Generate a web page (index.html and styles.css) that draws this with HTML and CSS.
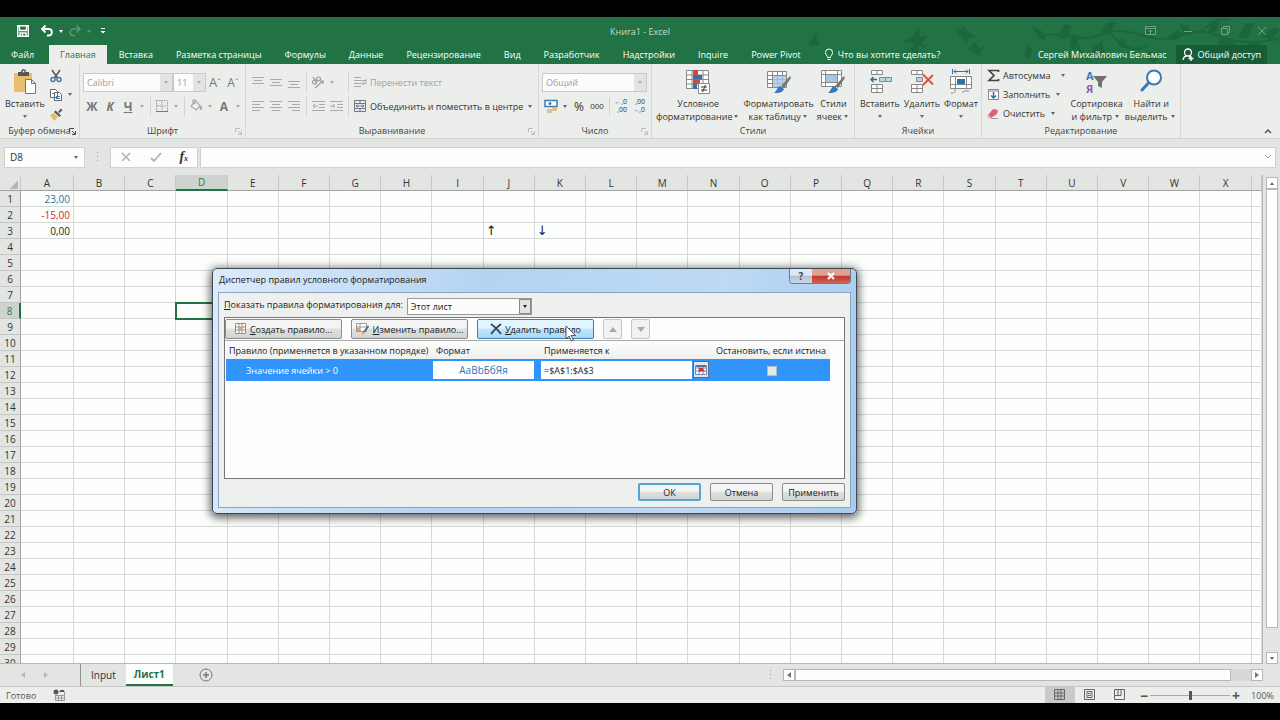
FILE: index.html
```html
<!DOCTYPE html>
<html lang="ru">

<head>
    <meta charset="UTF-8">
    <meta name="viewport" content="width=device-width, initial-scale=1.0">
    <title>Книга1 - Excel</title>
    <link rel="stylesheet" href="styles.css">
</head>

<body>
    <div class="app">
        <!-- Title bar and ribbon tabs -->
        <header class="top">
            <svg class="decor" viewBox="0 0 480 47" width="480" height="47" fill="none" stroke="#1d663d" stroke-width="2">
                <path d="M238 20c20-9 40 8 62-2s42 2 60 4 30-12 50-6 30 14 68 6M310 16c10 12 20 20 36 14M268 17c12 8 10 22 24 28M400 15c10-8 18-14 30-13M428 22c8 10 20 12 30 14"/>
                <g fill="#1d663d" stroke="none">
                    <path d="M8 28l8-13 1 8 3 5zM102 24l10-4 6-9 2 9 8-1-6 7 4 5-7-2-5 4-1-7zM110 31l6-2 3 6-5 2zM156 16l8-7 4 6 9 5-8 1-3 6-5-7zM168 33l7-8 4 6 8-2-6 5-2 6-5-5z"/>
                    <path d="M224 38l4-12 4 8-2 8zM240 22l-8-12 12 5 2 8zM258 21l6-14 8 2-6 12zM280 19l-6 14-5-5 4-11zM292 31l10-7 2 11-9 7zM300 15l8-10 8 1-7 12zM322 21l8 12-12-4zM344 20l4-13 8 3-5 10zM350 34l12 4-8 8-9-4zM366 21l12-8 6 5-9 6zM384 18l-5-12 10 4 2 8zM408 16l3-12 10-3-4 13zM420 18l12 10-14 2zM438 20l8-14 8 1-7 15zM452 24l13 6-10 6-9-6zM462 19l12-9 6 3-9 10z"/>
                </g>
            </svg>
            <div class="titlebar">
                <div class="quick">
                    <button class="q" aria-label="Сохранить"><svg width="14" height="14" viewBox="0 0 14 14" fill="none" stroke="#fff" stroke-width="1.400"><path d="M1.700 1.700h10.600v10.600H1.700zM3.500 2v4.500h7V2M4 12V9h6v3"/><path d="M6.500 9.500v2.500" stroke-width="1.500"/></svg></button>
                    <button class="q" aria-label="Отменить"><svg width="14" height="14" viewBox="0 0 14 14" fill="none" stroke="#fff" stroke-width="1.800"><path d="M5.500 1.500L2 5l3.500 3.500M2 5h6.500c4.500 0 4.500 6.500 0 6.500H7"/></svg></button>
                    <span class="caret light"></span>
                    <button class="q faded" aria-label="Вернуть"><svg width="14" height="14" viewBox="0 0 14 14" fill="none" stroke="#fff" stroke-width="1.600"><path d="M8.500 1.500L12 5 8.500 8.500M12 5H5.500c-4.500 0-4.500 6.500 0 6.500H7"/></svg></button>
                    <span class="caret light faded"></span>
                    <button class="q" aria-label="Настройка панели"><svg width="8" height="8" viewBox="0 0 8 8" fill="#fff"><path d="M2 1h4v1H2zM1.500 4h5L4 6.500z"/></svg></button>
                </div>
                <span class="doc-name">Книга1 - Excel</span>
                <div class="win-buttons">
                    <button aria-label="Параметры ленты"><svg width="12" height="12" viewBox="0 0 12 12" fill="none" stroke="currentColor"><path d="M.5 1.500h10v8H.5zM.5 3.500h10M5.500 9V5M3.500 7l2-2 2 2"/></svg></button>
                    <button aria-label="Свернуть"><svg width="12" height="12" viewBox="0 0 12 12" fill="none" stroke="currentColor"><path d="M2 6.500h8"/></svg></button>
                    <button aria-label="Развернуть"><svg width="12" height="12" viewBox="0 0 12 12" fill="none" stroke="currentColor"><path d="M2.500 3.500h6v6h-6zM4.500 3V1.500h6v6H9"/></svg></button>
                    <button aria-label="Закрыть"><svg width="12" height="12" viewBox="0 0 12 12" fill="none" stroke="currentColor"><path d="M2 2l8 8M10 2l-8 8"/></svg></button>
                </div>
            </div>
            <nav class="tabs">
                <a href="#" class="tab">Файл</a>
                <a href="#" class="tab active">Главная</a>
                <a href="#" class="tab">Вставка</a>
                <a href="#" class="tab">Разметка страницы</a>
                <a href="#" class="tab">Формулы</a>
                <a href="#" class="tab">Данные</a>
                <a href="#" class="tab">Рецензирование</a>
                <a href="#" class="tab">Вид</a>
                <a href="#" class="tab">Разработчик</a>
                <a href="#" class="tab">Надстройки</a>
                <a href="#" class="tab">Inquire</a>
                <a href="#" class="tab">Power Pivot</a>
                <a href="#" class="tab tell"><svg width="10" height="13" viewBox="0 0 10 13" fill="none" stroke="#fff"><path d="M3.500 9.500c0-2-2-2.500-2-5a3.500 3.500 0 0 1 7 0c0 2.500-2 3-2 5zM3.500 11.500h3"/></svg>Что вы хотите сделать?</a>
                <a href="#" class="tab user">Сергей Михайлович Бельмас</a>
                <button class="share"><svg width="12" height="13" viewBox="0 0 12 13" fill="none" stroke="#fff" stroke-width="1.300"><circle cx="6" cy="4.500" r="3.500"/><path d="M1 12c.5-3 2-4 4-4M7 7.500l1.500 2M9 8v5M6.500 10.500h5"/></svg>Общий доступ</button>
            </nav>
        </header>

        <!-- Ribbon -->
        <section class="ribbon">
            <div class="group g-clip">
                <div class="body">
                    <button class="big">
                        <svg width="24" height="25" viewBox="0 0 24 25"><path fill="#e8bd6b" d="M1 4h18v19H1z"/><path fill="#555" d="M5 3h3c0-4 5-4 5 0h3v4H5z"/><circle cx="10.500" cy="2.500" r="1" fill="#eee"/><path d="M12.500 10.500h6l4 4v10h-10zM18.500 10.500v4h4" fill="#fff" stroke="#777"/></svg>
                        Вставить<span class="caret"></span>
                    </button>
                    <div class="stack">
                        <button class="tool" aria-label="Вырезать"><svg width="14" height="14" viewBox="0 0 14 14" fill="none" stroke-width="1.500"><path stroke="#555" d="M3 1l5.500 8M11 1L5.500 9"/><g stroke="#3c7cb5"><circle cx="4" cy="10.500" r="2"/><circle cx="10" cy="10.500" r="2"/></g></svg></button>
                        <div class="row"><button class="tool" aria-label="Копировать"><svg width="14" height="14" viewBox="0 0 14 14" fill="#fff" stroke="#666"><path d="M1.500 1.500h5l2 2v6h-7zM5.500 4.500h5l2 2v6h-7z"/><path stroke="#3c7cb5" d="M3 5.500h2M7 8.500h4M7 10.500h4"/></svg></button><span class="caret"></span></div>
                        <button class="tool" aria-label="Формат по образцу"><svg width="14" height="14" viewBox="0 0 14 14"><path fill="#e8b96a" d="M1 8l4-2 4 4-4 4z"/><path fill="#555" d="M5 5l1.500-1.500 5.500 5L10.500 10zM9 5l3-3.500L13.500 3 10.500 6z"/></svg></button>
                    </div>
                </div>
                <div class="caption">Буфер обмена<svg class="launch" width="8" height="8"><use href="#launch"/></svg></div>
            </div>

            <div class="group g-font">
                <div class="body lines dim">
                    <div class="row">
                        <span class="combo c-font"><select aria-label="Шрифт"><option>Calibri</option></select><span class="drop"></span></span>
                        <span class="combo c-size"><select aria-label="Размер шрифта"><option>11</option></select><span class="drop"></span></span>
                        <button class="tool letter grow">A<sup>ˆ</sup></button>
                        <button class="tool letter">A<sup>ˇ</sup></button>
                    </div>
                    <div class="row">
                        <button class="tool letter"><b>Ж</b></button>
                        <button class="tool letter"><b><i>К</i></b></button>
                        <button class="tool letter"><b><u>Ч</u></b></button>
                        <span class="caret"></span><span class="sep"></span>
                        <button class="tool" aria-label="Границы"><svg width="12" height="12" viewBox="0 0 12 12" fill="none" stroke="#999" stroke-dasharray="1.500 1"><path d="M.5 .5h11v11M.5 .5v11M6 1v10M1 6h10"/><path stroke="#777" stroke-dasharray="none" d="M0 11.500h12"/></svg></button>
                        <span class="caret"></span><span class="sep"></span>
                        <button class="tool" aria-label="Заливка"><svg width="14" height="14" viewBox="0 0 14 14" fill="none" stroke="#aaa" stroke-width="1.200"><path d="M2 7l5-5 4 5-4 4zM6 5V1.500C6 .5 4 .5 4 1.500V5"/><path fill="#999" d="M12 7c2 4-1 4-1 2z"/></svg></button>
                        <span class="caret"></span>
                        <button class="tool letter"><b>А</b></button>
                        <span class="caret"></span>
                    </div>
                </div>
                <div class="caption">Шрифт<svg class="launch dim" width="8" height="8"><use href="#launch"/></svg></div>
            </div>

            <div class="group g-align">
                <div class="body lines">
                    <div class="row">
                        <button class="tool" aria-label="По верхнему краю"><svg class="ln" width="12" height="12"><path d="M0 1.500h12M2 4.500h8M0 7.500h12"/></svg></button>
                        <button class="tool" aria-label="По середине"><svg class="ln" width="12" height="12"><path d="M0 3.500h12M2 6.500h8M0 9.500h12"/></svg></button>
                        <button class="tool" aria-label="По нижнему краю"><svg class="ln" width="12" height="12"><path d="M0 5.500h12M2 8.500h8M0 11.500h12"/></svg></button>
                        <span class="sep"></span>
                        <button class="tool" aria-label="Ориентация"><svg width="14" height="14" viewBox="0 0 14 14" fill="none" stroke="#999" stroke-width="1.200"><circle cx="3.500" cy="7" r="2"/><circle cx="7.500" cy="4" r="2"/><path d="M2 2l4 6M4 13l8-7M12 9V6H9"/></svg></button>
                        <span class="caret pale"></span><span class="spacer"></span><span class="sep"></span>
                        <button class="wide dim"><svg class="ln" width="14" height="14"><path d="M1 2.500h7M1 5.500h12M1 8.500h7M1 11.500h7M13 4v4.500H9.500M11 6.500l-2 2 2 2"/></svg>Перенести текст</button>
                    </div>
                    <div class="row">
                        <button class="tool" aria-label="По левому краю"><svg class="ln" width="12" height="12"><path d="M0 1.500h12M0 4.500h8M0 7.500h12M0 10.500h8"/></svg></button>
                        <button class="tool" aria-label="По центру"><svg class="ln" width="12" height="12"><path d="M0 1.500h12M2 4.500h8M0 7.500h12M2 10.500h8"/></svg></button>
                        <button class="tool" aria-label="По правому краю"><svg class="ln" width="12" height="12"><path d="M0 1.500h12M4 4.500h8M0 7.500h12M4 10.500h8"/></svg></button>
                        <span class="sep"></span>
                        <button class="tool" aria-label="Уменьшить отступ"><svg class="ln" width="13" height="12"><path d="M0 1.500h13M7 4.500h6M7 7.500h6M0 10.500h13M6 6H1M3 4L1 6l2 2"/></svg></button>
                        <button class="tool" aria-label="Увеличить отступ"><svg class="ln" width="13" height="12"><path d="M0 1.500h13M7 4.500h6M7 7.500h6M0 10.500h13M0 6h5M3 4l2 2-2 2"/></svg></button>
                        <span class="sep"></span>
                        <button class="wide"><svg width="14" height="14" viewBox="0 0 14 14" fill="none" stroke="#777"><path d="M1.500 1.500h11v11h-11zM1 4.500h12M1 9.500h12M7 1v3M7 10v3"/><path stroke="#3c7cb5" d="M3 7h8M4.500 5.500L3 7l1.500 1.500M9.500 5.500L11 7 9.500 8.500"/></svg>Объединить и поместить в центре</button>
                        <span class="caret"></span>
                    </div>
                </div>
                <div class="caption">Выравнивание<svg class="launch dim" width="8" height="8"><use href="#launch"/></svg></div>
            </div>

            <div class="group g-num">
                <div class="body lines">
                    <div class="row dim">
                        <span class="combo c-num"><select aria-label="Числовой формат"><option>Общий</option></select><span class="drop"></span></span>
                    </div>
                    <div class="row">
                        <button class="tool" aria-label="Денежный формат"><svg width="14" height="14" viewBox="0 0 14 14"><path fill="#fff" stroke="#3c7cb5" stroke-width="1.500" d="M1 1.500h12v6H1z"/><circle cx="6" cy="4.500" r="1.500" fill="#3c7cb5"/><path d="M3 11h5M3 13h5M8 9h5M8 11h5" stroke="#e0b060" stroke-width="1.500"/></svg></button>
                        <span class="caret"></span>
                        <button class="tool pct">%</button>
                        <button class="tool zeros">000</button>
                        <span class="sep"></span>
                        <button class="tool digits"><span><em>←</em>,0</span><span>,00</span></button>
                        <button class="tool digits"><span>,00</span><span><em>→</em>,0</span></button>
                    </div>
                </div>
                <div class="caption">Число<svg class="launch dim" width="8" height="8"><use href="#launch"/></svg></div>
            </div>

            <div class="group g-styles">
                <div class="body">
                    <button class="big">
                        <svg width="24" height="25" viewBox="0 0 24 25"><path fill="#fff" stroke="#888" d="M.5 1.500h22v18H.5zM.5 6h22M.5 10.500h22M.5 15h22M6 1.500v18M17 1.500v18"/><path fill="#d04a42" d="M7 1h5v5H7zM7 11h7v4H7z"/><path fill="#3b6ea8" d="M7 6h9v4.500H7zM7 15h4v5H7z"/><path fill="#fff" stroke="#888" d="M12.500 14.500h11v10h-11z"/><path stroke="#333" d="M15 18h6M15 21h6M19.500 16l-3 7"/></svg>
                        <span>Условное<br>форматирование<i class="caret"></i></span>
                    </button>
                    <button class="big">
                        <svg width="24" height="25" viewBox="0 0 24 25"><path fill="#fff" stroke="#888" d="M.5 2.500h19v16H.5zM.5 6.500h19M.5 10.500h19M.5 14.500h19M5.500 2.500v16M10.500 2.500v16M15.500 2.500v16"/><path fill="#a9c5e4" d="M6 7h13v11H6z" opacity=".8"/><use href="#brush"/></svg>
                        <span>Форматировать<br>как таблицу<i class="caret"></i></span>
                    </button>
                    <button class="big">
                        <svg width="24" height="25" viewBox="0 0 24 25"><path fill="#fff" stroke="#888" d="M.5 1.500h20v16H.5zM.5 5.500h20M.5 13.500h20M4.500 1.500v16M16.500 1.500v16"/><path fill="#a9c5e4" d="M5 6h11v7H5z"/><use href="#brush"/></svg>
                        <span>Стили<br>ячеек<i class="caret"></i></span>
                    </button>
                </div>
                <div class="caption">Стили</div>
            </div>

            <div class="group g-cells">
                <div class="body">
                    <button class="big">
                        <svg width="24" height="25" viewBox="0 0 24 25" fill="#fff" stroke="#888"><path d="M3.500 1.500h11v4h-11zM9 1.500v4M3.500 15.500h11v8h-11zM9 15.500v8M3.500 19.500h11"/><path fill="#bcd3e4" d="M11.500 8.500h12v4h-12zM17.500 8.500v4"/><path fill="none" stroke="#2f6fae" stroke-width="1.500" d="M9 10.500H3M5.500 8L3 10.500 5.500 13"/></svg>
                        Вставить<span class="caret"></span>
                    </button>
                    <button class="big">
                        <svg width="24" height="25" viewBox="0 0 24 25" fill="#fff" stroke="#888"><path d="M1.500 1.500h11v4h-11zM7 1.500v4M1.500 15.500h11v8h-11zM7 15.500v8M1.500 19.500h11"/><path fill="#bcd3e4" d="M6.500 8.500h6v4h-6z"/><path fill="none" stroke="#dc5544" stroke-width="2" d="M13 5.500l10 10M23 6L13 16"/></svg>
                        Удалить<span class="caret"></span>
                    </button>
                    <button class="big">
                        <svg width="24" height="25" viewBox="0 0 24 25" fill="#fff" stroke="#888"><path d="M1.500 7.500h21v12h-21zM1.500 15.500h21M6.500 7.500v12M17.500 7.500v12M6 19.500v3l-2 1.500H2M13 24l2-2h5"/><path fill="#2f6fae" stroke="none" d="M8 10h8v5H8z"/><path fill="none" stroke="#2f6fae" d="M3.500 0v5M20.500 0v5M5 2.500h14M7 .5l-2 2 2 2M17 .5l2 2-2 2"/></svg>
                        Формат<span class="caret"></span>
                    </button>
                </div>
                <div class="caption">Ячейки</div>
            </div>

            <div class="group g-edit">
                <div class="body">
                    <div class="stack">
                        <button class="wide"><svg width="13" height="13" viewBox="0 0 13 13" fill="none" stroke="#444" stroke-width="1.700"><path d="M11.500 3V1.500H2l5 5-5 5h9.500V10"/></svg>Автосумма<span class="caret far"></span></button>
                        <button class="wide"><svg width="13" height="13" viewBox="0 0 13 13" fill="#fff" stroke="#888"><path d="M1.500 1.500h10v10h-10zM1.500 3h10"/><path fill="none" stroke="#2f6fae" stroke-width="1.500" d="M6.500 4v6M4 7.500l2.500 2.500L9 7.500"/></svg>Заполнить<span class="caret"></span></button>
                        <button class="wide"><svg width="13" height="13" viewBox="0 0 13 13"><path fill="#e0627a" d="M6 2l5 1-1 4-6 4-3-3z"/><path fill="#f3b3bf" d="M1 8l3 3-1.500 1L0 10z"/><path stroke="#999" d="M4 11.500h7"/></svg>Очистить<span class="caret"></span></button>
                    </div>
                    <button class="big">
                        <span class="sort"><span class="az"><b>А</b><b>Я</b></span><svg width="14" height="14" viewBox="0 0 14 14"><path fill="#707070" d="M0 1h14L9 7v6l-4-2V7z"/></svg></span>
                        <span>Сортировка<br>и фильтр<i class="caret"></i></span>
                    </button>
                    <button class="big">
                        <svg width="24" height="25" viewBox="0 0 24 25" fill="#fff" stroke="#3b78b0"><path stroke-width="3" stroke-linecap="round" d="M9.500 14L3 21"/><circle cx="15" cy="8.500" r="7" stroke-width="2"/></svg>
                        <span>Найти и<br>выделить<i class="caret"></i></span>
                    </button>
                </div>
                <div class="caption">Редактирование</div>
            </div>
            <button class="collapse" aria-label="Свернуть ленту"><svg width="8" height="6" viewBox="0 0 8 6" fill="none" stroke="#555" stroke-width="1.500"><path d="M1 5l3-3 3 3"/></svg></button>
        </section>

        <!-- Formula bar -->
        <section class="formula">
            <span class="namebox"><input type="text" value="D8" aria-label="Имя"><span class="caret"></span></span>
            <span class="dots"></span>
            <div class="fx">
                <button aria-label="Отмена"><svg width="12" height="12" viewBox="0 0 12 12" fill="none" stroke="#b0b0b0" stroke-width="1.500"><path d="M2 2l8 8M10 2l-8 8"/></svg></button>
                <button aria-label="Ввод"><svg width="12" height="12" viewBox="0 0 12 12" fill="none" stroke="#b0b0b0" stroke-width="1.800"><path d="M1 7l3 3 7-8"/></svg></button>
                <button class="f"><i>f</i><small>x</small></button>
            </div>
            <div class="fline"><input type="text" aria-label="Строка формул"><svg width="8" height="6" viewBox="0 0 8 6" fill="none" stroke="#999"><path d="M1 1l3 3 3-3"/></svg></div>
        </section>

        <!-- Sheet -->
        <main class="sheet">
            <div class="cells"><table class="grid" id="grid"></table></div>
            <div class="vscroll">
                <button aria-label="Вверх"><span class="caret up"></span></button>
                <span class="thumb"></span>
                <button aria-label="Вниз"><span class="caret"></span></button>
            </div>
        </main>

        <section class="sheetbar">
            <span class="nav"><i class="tri left"></i><i class="tri right"></i></span>
            <a href="#" class="sheet-tab">Input</a>
            <a href="#" class="sheet-tab current">Лист1</a>
            <button class="plus" aria-label="Новый лист"><svg width="14" height="14" viewBox="0 0 14 14" fill="none" stroke="#777"><circle cx="7" cy="7" r="6"/><path d="M7 4v6M4 7h6" stroke-width="1.500"/></svg></button>
            <span class="dots"></span>
            <div class="hscroll">
                <button aria-label="Влево"><i class="tri left"></i></button>
                <span class="thumb"></span>
                <button aria-label="Вправо"><i class="tri right"></i></button>
            </div>
        </section>

        <footer class="status">
            <span>Готово</span>
            <svg class="macro" width="12" height="12" viewBox="0 0 12 12"><circle cx="3" cy="3" r="2.500" fill="#555"/><path fill="none" stroke="#999" d="M6 2.500h5.500v9h-9V6M3 6.500h8M3 9h8M5.500 6v5M8.500 6v5"/><path fill="#555" d="M7 1h4v2H7z"/></svg>
            <div class="views">
                <button class="on" aria-label="Обычный"><svg width="12" height="12" fill="none" stroke="#666"><path d="M.5 .5h10v10H.5zM.5 4h10M.5 7h10M4 .5v10M7 .5v10"/></svg></button>
                <button aria-label="Разметка"><svg width="12" height="12" fill="none" stroke="#666"><path d="M.5 .5h10v10H.5zM3 2.500h5v6H3zM4 4.500h3M4 6.500h3"/></svg></button>
                <button aria-label="Страничный"><svg width="12" height="12" fill="none" stroke="#666"><path d="M.5 .5h10v10H.5zM4 .5v6H.5M7 .5v6H4"/></svg></button>
            </div>
            <button class="zoom-btn" aria-label="Уменьшить">−</button>
            <input class="zoom" type="range" min="0" max="100" value="50" aria-label="Масштаб">
            <button class="zoom-btn" aria-label="Увеличить">+</button>
            <span class="percent">100%</span>
        </footer>

        <!-- Conditional formatting rules manager -->
        <div class="dialog" role="dialog" aria-labelledby="dlg-title">
            <div class="dlg-head">
                <span id="dlg-title">Диспетчер правил условного форматирования</span>
                <div class="dlg-ctl"><button class="help">?</button><button class="close" aria-label="Закрыть"><svg width="10" height="8" viewBox="0 0 10 8"><path d="M2 1l6 6M8 1L2 7" stroke="#fff" stroke-width="2.200"/></svg></button></div>
            </div>
            <div class="dlg-body">
                <div class="scope">
                    <label for="scope"><u>П</u>оказать правила форматирования для:</label>
                    <span class="combo"><select id="scope"><option>Этот лист</option></select><span class="drop"></span></span>
                </div>
                <div class="rules">
                    <div class="actions">
                        <button class="btn"><svg width="12" height="12" viewBox="0 0 12 12" fill="#fff" stroke="#a08c78"><path d="M.5 .5h10v10H.5zM.5 4h10M.5 7h10M4 .5v10M7 .5v10"/><path fill="#e8a24c" stroke="none" d="M4 4h3v3H4z"/></svg><span><u>С</u>оздать правило...</span></button>
                        <button class="btn"><svg width="14" height="12" viewBox="0 0 14 12" fill="#fff" stroke="#999"><path d="M.5 .5h10v8H.5zM.5 4h10M4 .5v8"/><path stroke="#4a6f95" stroke-width="2" d="M12.500 3L8 9"/><path fill="#e8a24c" stroke="none" d="M1 5h3v3H1zM6 9l3 1-3 2z"/></svg><span><u>И</u>зменить правило...</span></button>
                        <button class="btn hover"><svg width="12" height="12" viewBox="0 0 12 12" fill="none" stroke="#3d4c5c" stroke-width="2"><path d="M1 1c3 2 7 6 10 10M11 1C7 4 4 7 1 11"/></svg><span><u>У</u>далить правило</span></button>
                        <button class="btn mini" disabled aria-label="Вверх"><span class="caret up"></span></button>
                        <button class="btn mini" disabled aria-label="Вниз"><span class="caret"></span></button>
                    </div>
                    <table class="rule-table">
                        <colgroup><col class="c-rule"><col class="c-format"><col class="c-range"><col class="c-stop"></colgroup>
                        <thead><tr><th>Правило (применяется в указанном порядке)</th><th>Формат</th><th>Применяется к</th><th>Остановить, если истина</th></tr></thead>
                        <tbody><tr>
                            <td class="rule-name">Значение ячейки &gt; 0</td>
                            <td><div class="preview">АаВbБбЯя</div></td>
                            <td><div class="range"><input type="text" value="=$A$1:$A$3" aria-label="Применяется к"><button aria-label="Выбрать диапазон"><svg width="12" height="10" viewBox="0 0 12 10"><path fill="#fff" stroke="#7a86b0" d="M.5 .5h11v9H.5zM.5 3h11M.5 6h11M4 .5v9M8 .5v9"/><path fill="#5570a8" d="M1 0h10v2H1z"/><path fill="#d03030" d="M4 3h4v1l2 3-3-1-3 1z"/></svg></button></div></td>
                            <td class="stop"><input type="checkbox" aria-label="Остановить, если истина"></td>
                        </tr></tbody>
                    </table>
                </div>
                <div class="dlg-foot">
                    <button class="btn default">ОК</button>
                    <button class="btn">Отмена</button>
                    <button class="btn">Применить</button>
                </div>
            </div>
            <svg class="cursor" width="12" height="18" viewBox="0 0 12 18"><path fill="#fff" stroke="#333" stroke-width=".8" d="M1 1v13l3-3 2.500 5 2-1L6 10.500h4.500z"/></svg>
        </div>
    </div>

    <!-- Shared icon parts -->
    <svg width="0" height="0" class="defs">
        <symbol id="launch" viewBox="0 0 8 8"><path fill="none" stroke="currentColor" d="M1.500 5V1.500H6M4 4l3 3M7.500 4v3.500H4"/></symbol>
        <symbol id="brush" viewBox="0 0 24 25"><path fill="#777" d="M23 7l1 2-7 10-3-2z"/><path fill="#3b78b8" d="M13 17l4 3c-1 4-6 4-10 4 3-2 3-6 6-7z"/></symbol>
    </svg>
    <script src="grid.js"></script>
</body>

</html>
```
FILE: styles.css
```css
* {
    box-sizing: border-box;
}

body {
    margin: 0;
    background: #000;
    font-family: "Open Sans", "Noto Sans", sans-serif;
    font-size: 9px;
    line-height: 13px;
    color: #333;
}

button,
input,
select {
    font: inherit;
    color: inherit;
    margin: 0;
    padding: 0;
    border: none;
    background: none;
    border-radius: 0;
    outline: none;
}

a {
    color: inherit;
    text-decoration: none;
}

svg {
    flex: none;
    display: block;
}

.defs {
    position: absolute;
}

.app {
    position: relative;
    display: flex;
    flex-direction: column;
    height: 100vh;
    padding: 17px 0;
}

/* Title bar and tabs */
.top {
    position: relative;
    background: #217346;
    color: #fff;
    height: 47px;
}

.decor {
    position: absolute;
    right: 0;
    top: 0;
}

.titlebar {
    position: relative;
    display: grid;
    grid-template-columns: 1fr auto 1fr;
    align-items: center;
    height: 28px;
}

.quick {
    display: flex;
    align-items: center;
    gap: 4px;
    padding-left: 13px;
    height: 24px;
}

.q {
    display: flex;
    justify-content: center;
    width: 20px;
}

.quick .caret {
    margin: 0 -5px;
}

.faded {
    opacity: 0.25;
}

.doc-name {
    color: #c5dccd;
}

.win-buttons {
    display: flex;
    justify-content: flex-end;
    height: 24px;
    color: #6fa486;
}

.win-buttons button {
    display: flex;
    align-items: center;
    justify-content: center;
    width: 37px;
}

.tabs {
    position: relative;
    display: flex;
    align-items: stretch;
    gap: 1px;
    height: 19px;
    padding-right: 13px;
}

.tab {
    display: flex;
    align-items: center;
    padding: 0 11px;
    white-space: nowrap;
}

.tab.active {
    background: #eceeec;
    color: #2b7a4d;
    margin-left: 3px;
}

.tab.tell {
    gap: 4px;
}

.tab.user {
    margin-left: auto;
    padding: 0 8px;
}

.share {
    display: flex;
    align-items: center;
    gap: 4px;
    padding: 0 6px;
    background: #185c37;
    white-space: nowrap;
}

/* Small arrows */
.caret {
    flex: none;
    display: inline-flex;
    align-items: center;
    justify-content: center;
    width: 10px;
    height: 8px;
}

.caret::before {
    content: "";
    border: 2px solid transparent;
    border-top: 3px solid #666;
    border-bottom: none;
}

.caret.up::before {
    border-top: none;
    border-bottom: 3px solid #666;
}

.caret.light::before {
    border-top-color: #fff;
}

.caret.pale::before,
.dim .caret::before {
    border-top-color: #aaa;
}

.caret.far {
    margin-left: 4px;
}

.tri {
    border: 3px solid transparent;
}

.tri.left {
    border-right: 4px solid #777;
    border-left: none;
}

.tri.right {
    border-left: 4px solid #777;
    border-right: none;
}

/* Ribbon */
.ribbon {
    display: flex;
    height: 75px;
    background: #eceeec;
    border-bottom: 1px solid #d2d4d2;
}

.group {
    flex: none;
    display: flex;
    flex-direction: column;
    border-right: 1px solid #d6d8d6;
    padding: 0 3px;
}

.g-clip {
    width: 80px;
}

.g-font {
    width: 166px;
}

.g-align {
    width: 293px;
}

.g-num {
    width: 113px;
}

.g-styles {
    width: 203px;
}

.g-cells {
    width: 127px;
}

.g-edit {
    width: 199px;
}

.body {
    flex: 1;
    min-height: 0;
    display: flex;
    align-items: flex-start;
    padding-top: 5px;
}

.body.lines {
    flex-direction: column;
    gap: 4px;
    padding-top: 8px;
}

.row {
    display: flex;
    align-items: center;
    height: 20px;
}

.stack {
    display: flex;
    flex-direction: column;
    align-items: flex-start;
    margin-top: -3px;
}

.stack > * {
    height: 19px;
}

.caption {
    flex: none;
    display: flex;
    justify-content: center;
    height: 15px;
    position: relative;
    line-height: 16px;
    color: #444;
}

.launch {
    position: absolute;
    right: 0;
    top: 4px;
}

.launch.dim {
    color: #bbb;
}

.tool {
    flex: none;
    display: flex;
    align-items: center;
    justify-content: center;
    width: 18px;
    height: 19px;
}

.letter {
    font-size: 12px;
    color: #777;
}

.grow {
    font-size: 13px;
}

.letter sup {
    font-size: 9px;
    line-height: 9px;
}

.pct {
    font-size: 12px;
}

.zeros {
    font-family: "Liberation Sans", sans-serif;
    font-size: 8px;
}

.digits {
    flex-direction: column;
    align-items: flex-end;
    padding-right: 3px;
    font-size: 7px;
    line-height: 8px;
}

.digits em {
    font-style: normal;
    color: #2f6fae;
}

.sep {
    flex: none;
    width: 6px;
    height: 19px;
    background: linear-gradient(#d2d4d2, #d2d4d2) center / 1px 100% no-repeat;
}

.spacer {
    width: 8px;
}

.ln {
    fill: none;
    stroke: #aaa;
}

.wide {
    display: flex;
    align-items: center;
    gap: 3px;
    padding: 0 2px;
    white-space: nowrap;
}

.wide.dim,
.dim .combo {
    color: #a0a0a0;
}

.big {
    flex: none;
    display: flex;
    flex-direction: column;
    align-items: center;
    white-space: nowrap;
    padding: 0 2px;
}

.big > svg,
.sort {
    margin-bottom: 3px;
}

.big .caret {
    height: 13px;
    vertical-align: top;
}

.g-styles .big {
    padding: 0;
}

.g-styles .caret {
    width: 8px;
}

.g-styles .body {
    gap: 3px;
    padding-left: 1px;
}

.g-cells .body {
    justify-content: space-between;
}

.g-edit .body {
    padding-right: 4px;
}

.g-edit .big {
    padding: 0 1px;
}

.g-edit .stack {
    flex: 1;
}

.sort {
    display: flex;
    align-items: center;
    height: 25px;
}

.az {
    display: flex;
    flex-direction: column;
    font-size: 11px;
    line-height: 13px;
    color: #3b78b8;
}

.az b + b {
    color: #9259b5;
}

.collapse {
    margin: auto 8px 4px auto;
}

/* Combo boxes: arrow cell shares the last grid column with the select */
.combo {
    display: grid;
    grid-template-columns: 1fr 12px;
    height: 19px;
    background: #fbfcfb;
    border: 1px solid #c8cac8;
}

.combo select {
    grid-area: 1 / 1 / 2 / 3;
    appearance: none;
    padding-left: 3px;
}

.drop {
    grid-area: 1 / 2 / 2 / 3;
    display: flex;
    align-items: center;
    justify-content: center;
    background: #e2e4e2;
    pointer-events: none;
}

.drop::before {
    content: "";
    border: 2px solid transparent;
    border-top: 3px solid #aaa;
    border-bottom: none;
}

.c-font {
    width: 90px;
}

.c-size {
    width: 33px;
}

.c-num {
    width: 105px;
}

/* Formula bar */
.formula {
    display: flex;
    align-items: center;
    height: 36px;
    padding: 0 4px;
    background: #e2e5e2;
}

.namebox,
.fx,
.fline {
    display: flex;
    align-items: center;
    height: 21px;
    background: #fcfdfc;
    border: 1px solid #d0d2d0;
}

.namebox {
    width: 81px;
    padding: 0 3px 0 5px;
}

.namebox input {
    flex: 1;
    min-width: 0;
    font-size: 10px;
}

.dots {
    width: 25px;
    height: 10px;
    background: repeating-linear-gradient(#999 0 1px, transparent 1px 4px) center / 1px 100% no-repeat;
}

.fx {
    width: 88px;
    justify-content: space-around;
    margin-right: 2px;
}

.fx .f {
    font-family: "Liberation Serif", serif;
    font-size: 14px;
    font-weight: bold;
}

.fx small {
    font-size: 8px;
    font-style: italic;
}

.fline {
    flex: 1;
    padding-right: 3px;
}

.fline input {
    flex: 1;
}

/* Sheet */
.sheet {
    flex: 1;
    min-height: 0;
    display: flex;
    background: #e2e5e2;
}

.cells {
    flex: 1;
    overflow: hidden;
    border-right: 1px solid #b5b8b5;
    border-bottom: 1px solid #b5b8b5;
}

.grid {
    width: 100%;
    table-layout: fixed;
    border-collapse: separate;
    border-spacing: 0;
    background: #fcfefc;
    font-size: 10px;
    line-height: 14px;
}

.grid .w-head {
    width: 21px;
}

.grid .w-first {
    width: 53px;
}

.grid .w-rest {
    width: 10px;
}

.grid th,
.grid td {
    height: 16px;
    padding: 0;
    border-right: 1px solid #d6d8d6;
    border-bottom: 1px solid #d6d8d6;
    font-weight: 400;
    white-space: nowrap;
}

.grid th {
    background: #e2e5e2;
    border-color: #c4c7c4;
}

.grid tbody th {
    border-right-color: #a0a3a0;
}

.grid thead th {
    border-bottom-color: #a0a3a0;
}

.grid .corner {
    background: linear-gradient(135deg, transparent 60%, #b4b7b4 60%) 8px 4px / 10px 10px no-repeat #e2e5e2;
}

.grid thead .picked {
    background: #cfd3cf;
    border-bottom: 2px solid #217346;
    color: #2b7a4d;
}

.grid tbody .picked {
    background: #cfd3cf;
    border-right: 2px solid #217346;
    color: #2b7a4d;
}

.grid .num {
    text-align: right;
    padding-right: 3px;
    color: #222;
}

.grid .pos {
    color: #1f77b4;
}

.grid .neg {
    color: #d8202e;
}

.grid .sym {
    color: #222;
    font-family: "DejaVu Sans", sans-serif;
    font-size: 13px;
    padding-left: 2px;
}

.grid .active-cell {
    outline: 2px solid #217346;
    outline-offset: -1px;
}

.vscroll {
    display: flex;
    flex-direction: column;
    width: 17px;
    padding: 2px 3px 0;
}

.vscroll button,
.hscroll button {
    display: flex;
    align-items: center;
    justify-content: center;
    width: 12px;
    height: 12px;
    background: #fcfdfc;
    border: 1px solid #b5b8b5;
}

.vscroll .thumb {
    flex: 1;
    width: 12px;
    margin-bottom: 24px;
    background: #fcfdfc;
    border: 1px solid #b5b8b5;
}

.sheetbar {
    display: flex;
    align-items: center;
    height: 23px;
    background: #e2e5e2;
    border-bottom: 1px solid #c4c7c4;
    padding-right: 17px;
    font-size: 10px;
}

.nav {
    display: flex;
    justify-content: center;
    gap: 19px;
    width: 80px;
    padding-right: 11px;
    opacity: 0.4;
}

.sheet-tab {
    display: flex;
    align-items: center;
    align-self: stretch;
    padding: 0 10px;
    border-left: 1px solid #8f928f;
}

.sheet-tab.current {
    background: #fcfefc;
    color: #217346;
    font-weight: bold;
    border: none;
    border-bottom: 2px solid #217346;
    padding: 0 8px;
}

.plus {
    margin-left: 26px;
}

.sheetbar .dots {
    margin-left: auto;
}

.hscroll {
    display: flex;
    width: 38%;
    background: #d6d9d6;
}

.hscroll .thumb {
    flex: 1;
    margin-right: 20px;
    background: #fcfdfc;
    border: 1px solid #b5b8b5;
}

/* Status bar */
.status {
    display: flex;
    align-items: center;
    height: 16px;
    padding: 0 6px;
    background: #eceeec;
    color: #555;
}

.macro {
    margin-left: 17px;
}

.views {
    display: flex;
    align-self: stretch;
    margin-left: auto;
    margin-right: 3px;
}

.views button {
    display: flex;
    align-items: center;
    justify-content: center;
    width: 30px;
}

.views .on {
    background: #c8cbc8;
}

.zoom-btn {
    width: 12px;
    font-size: 14px;
    font-weight: bold;
}

.zoom {
    appearance: none;
    width: 80px;
    height: 12px;
    background: linear-gradient(#aaa, #aaa) center / 100% 1px no-repeat;
}

.zoom::-webkit-slider-thumb {
    appearance: none;
    width: 3px;
    height: 9px;
    background: #555;
}

.percent {
    width: 32px;
    text-align: right;
}

/* Dialog */
.dialog {
    position: absolute;
    left: 212px;
    top: 268px;
    width: 645px;
    padding: 0 5px 5px;
    border: 1px solid #3c4854;
    border-radius: 5px;
    background: linear-gradient(100deg, #dcebfa, #b4d3f3 40%, #bdd9f5 75%, #a8cbef);
    box-shadow: 0 2px 9px 2px rgba(0, 0, 0, 0.6);
    color: #222;
}

.dlg-head {
    display: flex;
    justify-content: space-between;
    height: 23px;
    line-height: 22px;
    padding-left: 1px;
}

.dlg-ctl {
    display: flex;
    height: 15px;
    line-height: 14px;
    border: 1px solid #6d7c8c;
    border-top: none;
    border-radius: 0 0 4px 4px;
}

.dlg-ctl button {
    display: flex;
    align-items: center;
    justify-content: center;
}

.help {
    width: 22px;
    font-size: 10px;
    font-weight: bold;
    color: #445;
    border-radius: 0 0 0 3px;
    background: linear-gradient(#dfe9f3 45%, #b3c2d2 50%, #ccd9e6);
}

.close {
    width: 38px;
    border-radius: 0 0 3px 0;
    background: linear-gradient(#e2a193 45%, #c0392b 50%, #d0604e);
}

.dlg-body {
    padding: 5px;
    background: #eef0ef;
    border: 1px solid #8ba3bc;
}

.scope {
    display: flex;
    gap: 4px;
    height: 19px;
}

.scope .combo {
    width: 125px;
    height: 17px;
    border-color: #999;
}

.scope .drop {
    border: 1px solid #888;
}

.scope .drop::before {
    border-top-color: #222;
}

.rules {
    height: 162px;
    background: #fcfdfc;
    border: 1px solid #777;
}

.actions {
    display: flex;
    align-items: center;
    gap: 9px;
    height: 23px;
    border-bottom: 1px solid #aaa;
}

.btn {
    display: flex;
    align-items: center;
    justify-content: center;
    gap: 3px;
    height: 18px;
    width: 63px;
    border: 1px solid #8a8c8a;
    border-radius: 2px;
    background: linear-gradient(#f4f4f4 45%, #dfe1df 50%, #d2d4d2);
    white-space: nowrap;
}

.actions .btn {
    width: 117px;
    height: 20px;
}

.actions .mini {
    width: 19px;
    border-color: #c4c6c4;
    background: #f1f3f1;
}

.mini .caret::before {
    border: 4px solid transparent;
    border-top: 5px solid #aaa;
    border-bottom: none;
}

.mini .caret.up::before {
    border-top: none;
    border-bottom: 5px solid #aaa;
}

.actions .hover {
    border-color: #3c7fb1;
    background: linear-gradient(#e2f4fd 45%, #bee6fd 50%, #a7d9f5);
}

.btn.default {
    border: 2px solid #55a5cc;
}

.rule-table {
    width: 604px;
    margin-left: 1px;
    table-layout: fixed;
    border-collapse: collapse;
}

.c-rule {
    width: 207px;
}

.c-format {
    width: 108px;
}

.c-range {
    width: 172px;
}

.rule-table th {
    height: 18px;
    padding: 0 3px;
    font-weight: 400;
    text-align: left;
    white-space: nowrap;
    background: linear-gradient(#fdfdfd, #eef0ef);
}

.rule-table td {
    height: 22px;
    padding: 0;
    background: #3094fb;
    color: #fff;
}

.rule-table .rule-name {
    padding-left: 20px;
}

.preview {
    width: 101px;
    height: 18px;
    line-height: 18px;
    text-align: center;
    font-size: 10px;
    background: #fff;
    color: #1f77b4;
}

.range {
    display: flex;
    gap: 1px;
}

.range input {
    width: 151px;
    height: 18px;
    padding-left: 3px;
    background: #fff;
    color: #222;
}

.range button {
    display: flex;
    align-items: center;
    justify-content: center;
    width: 16px;
    height: 17px;
    background: #e4e6ea;
    border: 1px solid #667;
}

.rule-table .stop {
    text-align: center;
}

.stop input {
    appearance: none;
    display: inline-block;
    width: 10px;
    height: 10px;
    background: #e6e8e6;
    border: 1px solid #b4bcc4;
    vertical-align: middle;
}

.dlg-foot {
    display: flex;
    justify-content: flex-end;
    gap: 9px;
    padding: 4px 0 1px;
}

.cursor {
    position: absolute;
    left: 352px;
    top: 56px;
}
```
FILE: grid.js
```js
const COLUMNS = "ABCDEFGHIJKLMNOPQRSTUVWX".split("");
const ROW_COUNT = 30;
const ACTIVE = { col: "D", row: 8 };

// Values shown on the sheet, keyed by address
const values = {
    A1: { text: "23,00", cls: "num pos" },
    A2: { text: "-15,00", cls: "num neg" },
    A3: { text: "0,00", cls: "num" },
    J3: { text: "↑", cls: "sym" },
    K3: { text: "↓", cls: "sym" }
};

function headerRow() {
    let html = '<th class="corner w-head"></th>';
    for (const col of COLUMNS) {
        const cls = (col === "A" ? "w-first" : "") + (col === ACTIVE.col ? " picked" : "");
        html += `<th class="${cls}">${col}</th>`;
    }
    return html + '<th class="w-rest"></th>';
}

function bodyRow(row) {
    let html = `<th class="${row === ACTIVE.row ? "picked" : ""}">${row}</th>`;
    for (const col of COLUMNS) {
        const cell = values[col + row] || { text: "", cls: "" };
        const active = col === ACTIVE.col && row === ACTIVE.row ? " active-cell" : "";
        html += `<td class="${cell.cls}${active}">${cell.text}</td>`;
    }
    return html + "<td></td>";
}

let rows = "";
for (let r = 1; r <= ROW_COUNT; r++) {
    rows += `<tr>${bodyRow(r)}</tr>`;
}

document.getElementById("grid").innerHTML =
    `<thead><tr>${headerRow()}</tr></thead><tbody>${rows}</tbody>`;
```
